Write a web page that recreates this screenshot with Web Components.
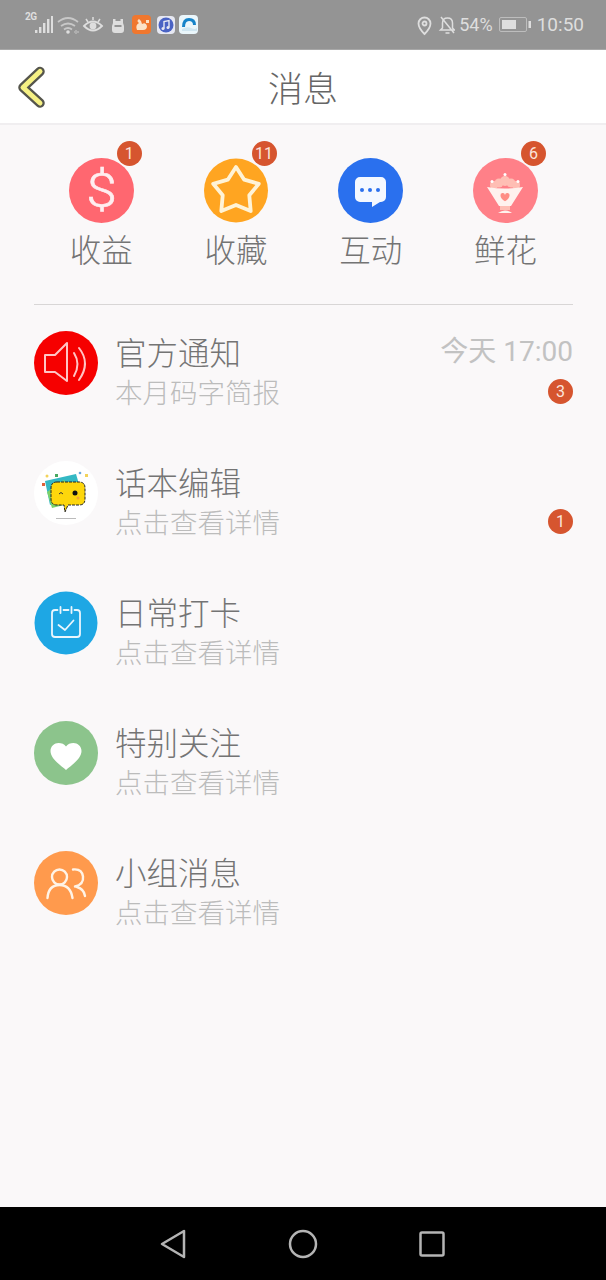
<!DOCTYPE html>
<html lang="zh-CN">

<head>
    <meta charset="UTF-8">
    <title>消息</title>
    <style>
        html, body { margin: 0; padding: 0; }
        body {
            width: 606px;
            height: 1280px;
            overflow: hidden;
            display: flex;
            flex-direction: column;
            background: #faf8f9;
            font-family: "Noto Sans CJK SC", "Noto Sans", sans-serif;
        }
        svg { display: block; }
    </style>
</head>

<body>
    <template id="status-bar-template">
        <style>
            :host { display: flex; flex: none; height: 50px; box-sizing: border-box; border-bottom: 1px solid #a8a8a8; background: #949494; color: #dedede; align-items: center; justify-content: space-between; padding: 0 22px 0 25px; font-family: Roboto, "Liberation Sans", sans-serif; }
            .group { display: flex; align-items: center; }
            .two-g { font-size: 10px; line-height: 10px; font-weight: 700; align-self: flex-start; margin-top: 5px; width: 10px; letter-spacing: -0.5px; }
            .level { font-size: 18px; margin: 0 6px 0 4px; }
            .clock { font-size: 19px; margin-left: 6px; }
            ::slotted([slot="left"]) { margin-top: 3px; }
        </style>
        <div class="group"><span class="two-g">2G</span><slot name="left"></slot></div>
        <div class="group"><slot name="location"></slot><span class="level">54%</span><slot name="battery"></slot><span class="clock">10:50</span></div>
    </template>

    <template id="page-header-template">
        <style>
            :host { display: flex; flex: none; position: relative; height: 75px; box-sizing: border-box; border-bottom: 2px solid #f0eef0; background: #fff; align-items: center; justify-content: center; }
            h1 { margin: 0; font-size: 35px; line-height: 71px; font-weight: 300; color: #666; }
            ::slotted(svg) { position: absolute; left: 14px; top: 13px; }
        </style>
        <slot name="back"></slot>
        <h1><slot></slot></h1>
    </template>

    <template id="count-badge-template">
        <style>
            :host { display: flex; width: 25px; height: 25px; border-radius: 50%; background: #d6552f; color: #fbe4dc; align-items: center; justify-content: center; font: 16px/25px Roboto, "Liberation Sans", sans-serif; }
        </style>
        <slot></slot>
    </template>

    <template id="shortcut-item-template">
        <style>
            :host { display: flex; flex-direction: column; align-items: center; }
            .icon { position: relative; width: 65px; height: 65px; }
            count-badge { position: absolute; left: 48px; top: -17px; }
            .label { margin-top: 4px; font-size: 31.5px; line-height: 42px; font-weight: 300; color: #747474; }
        </style>
        <div class="icon"><slot name="icon"></slot></div>
        <div class="label"></div>
    </template>

    <template id="message-row-template">
        <style>
            :host { display: flex; height: 130px; column-gap: 16px; }
            .icon { flex: none; width: 65px; height: 65px; }
            .text { flex: 1; }
            .title { font-size: 31.5px; line-height: 40px; font-weight: 300; color: #747474; }
            .sub { font-size: 27.5px; line-height: 40px; font-weight: 300; color: #bcbcbc; }
            .meta { display: flex; flex-direction: column; align-items: flex-end; padding-top: 2px; }
            .time { height: 38px; font: 28px/38px Roboto, "Noto Sans CJK SC", sans-serif; color: #c2c2c2; }
            count-badge { margin-top: 8px; }
        </style>
        <div class="icon"><slot name="icon"></slot></div>
        <div class="text">
            <div class="title"></div>
            <div class="sub"></div>
        </div>
        <div class="meta"></div>
    </template>

    <template id="soft-keys-template">
        <style>
            :host { display: flex; flex: none; height: 73px; background: #000; align-items: center; justify-content: center; column-gap: 100px; }
        </style>
        <slot></slot>
    </template>

    <status-bar>
        <svg slot="left" width="173" height="32" viewBox="0 0 173 32" fill="none">
            <!-- signal -->
            <g fill="#dedede"><rect x="0" y="20" width="2.4" height="3"/><rect x="4" y="17" width="2.4" height="6"/><rect x="8" y="13" width="2.4" height="10"/><rect x="12" y="9" width="2.4" height="14"/><rect x="16" y="6" width="2" height="17" /></g>
            <!-- wifi -->
            <g stroke="#c8c8c8" stroke-width="1.8"><path d="M23 12q10-8 20 0"/><path d="M26 16q7-5 14 0"/><path d="M29 19.500q4-3 8 0"/></g>
            <circle cx="33" cy="22" r="1.800" fill="#dedede"/>
            <path d="M39 22h1M41 20v4M43 21v2" stroke="#c8c8c8" stroke-width="1"/>
            <!-- eye -->
            <path d="M49 16q9-9 18 0q-9 9-18 0z" stroke="#dedede" stroke-width="1.800"/>
            <circle cx="58" cy="16" r="3.400" fill="#dedede"/>
            <path d="M51 9l2 3M58 7v3M65 9l-2 3" stroke="#dedede" stroke-width="1.500"/>
            <!-- hippo -->
            <path d="M78 9h2.500v2h5V9H88v4l1 3v4q0 3-3 3h-6q-3 0-3-3v-4l1-3z" fill="#dedede"/>
            <rect x="79.500" y="15" width="7" height="2" fill="#949494"/>
            <!-- squirrel app -->
            <rect x="97" y="5" width="19" height="19" rx="4" fill="#f0772e"/>
            <path d="M102 20q-2-5 2-7q-3-2 0-4q3 2 3 5q4-2 5 2q0 4-4 4z" fill="#fbe3c8"/>
            <path d="M111 10h3v3h-3z" fill="#fbe3c8"/>
            <!-- music app -->
            <rect x="122" y="6" width="18" height="18" rx="4" fill="#e6e8f2"/>
            <circle cx="131" cy="15" r="7.500" fill="#4a63c4"/>
            <path d="M129 18.500v-7l5-1v7" stroke="#e6e8f2" stroke-width="1.400"/>
            <circle cx="128" cy="18.500" r="1.500" fill="#e6e8f2"/><circle cx="133" cy="17.500" r="1.500" fill="#e6e8f2"/>
            <!-- browser app -->
            <rect x="144" y="5" width="19" height="19" rx="4" fill="#eaf6fb"/>
            <path d="M147 17q0-9 7-9t7 7h-3q0-4-4-4t-4 6z" fill="#1583c9"/>
            <path d="M147 19q5-3 9-1t6 0v3h-15z" fill="#cfe6f1"/>
        </svg>
        <svg slot="location" width="38" height="22" viewBox="0 0 38 22" fill="none" stroke="#dedede" stroke-width="1.800">
            <path d="M7.500 20q-6-6-6-10.500a6 6 0 0 1 12 0q0 4.500-6 10.500z"/>
            <circle cx="7.500" cy="9.500" r="2"/>
            <path d="M30.500 4q5 0 5 5v5l2 2h-14l2-2v-5q0-5 5-5zM28.500 19h4M24 3l13 16" stroke-width="1.500"/>
        </svg>
        <svg slot="battery" width="32" height="15" viewBox="0 0 32 15">
            <rect x="0.500" y="0.500" width="27" height="14" rx="1.500" fill="none" stroke="#bdbdbd"/>
            <rect x="3" y="3" width="14" height="9" fill="#dedede"/>
            <rect x="29.500" y="4" width="2.500" height="7" fill="#dedede"/>
        </svg>
    </status-bar>

    <page-header>
        <svg slot="back" width="36" height="46" viewBox="0 0 36 46" fill="none" stroke-linecap="round" stroke-linejoin="round">
            <path d="M26 8.500 9 24.500 26 40" stroke="#55554c" stroke-width="9.500"/>
            <path d="M26 8.500 9 24.500 26 40" stroke="#f6f184" stroke-width="5"/>
        </svg>
        消息
    </page-header>

    <app-main>
        <shortcut-grid>
            <shortcut-item label="收益" badge="1">
                <svg slot="icon" width="65" height="65" viewBox="0 0 65 65">
                    <circle cx="32.500" cy="32.500" r="32.500" fill="#ff6770"/>
                    <text transform="translate(32.500 49) scale(1.150 1)" text-anchor="middle" font-family="Roboto" font-weight="300" font-size="48" fill="#ffeef0" stroke="#ffeef0" stroke-width=".6">$</text>
                </svg>
            </shortcut-item>
            <shortcut-item label="收藏" badge="11">
                <svg slot="icon" width="65" height="65" viewBox="0 0 65 65">
                    <circle cx="32" cy="32.500" r="32" fill="#ffa521"/>
                    <path d="M32 9 40.200 21.700 54.800 25.800 45.300 37.300 46.700 53 32 47 17.300 53 18.700 37.300 9.200 25.800 23.800 21.700z" fill="#ffa521" stroke="#fff3d6" stroke-width="3.800" stroke-linejoin="round"/>
                </svg>
            </shortcut-item>
            <shortcut-item label="互动">
                <svg slot="icon" width="65" height="65" viewBox="0 0 65 65">
                    <circle cx="32.500" cy="32.500" r="32.500" fill="#2a70ee"/>
                    <path d="M22 19h21a5 5 0 0 1 5 5v15a5 5 0 0 1-5 5h-1l-8 5v-5H22a5 5 0 0 1-5-5V24a5 5 0 0 1 5-5z" fill="#f4f8ff"/>
                    <g fill="#2a70ee"><circle cx="24" cy="32" r="2"/><circle cx="32" cy="32" r="2"/><circle cx="40" cy="32" r="2"/></g>
                </svg>
            </shortcut-item>
            <shortcut-item label="鲜花" badge="6">
                <svg slot="icon" width="65" height="65" viewBox="0 0 65 65">
                    <circle cx="32.500" cy="32.500" r="32.500" fill="#ff8088"/>
                    <g fill="#ffbeb4"><circle cx="21" cy="27" r="4"/><circle cx="26" cy="25" r="4.500"/><circle cx="32" cy="23" r="5"/><circle cx="38" cy="25" r="4.500"/><circle cx="43" cy="27" r="4"/></g>
                    <g fill="#fff"><circle cx="19" cy="23.500" r="1.500"/><circle cx="45" cy="23.500" r="1.500"/><circle cx="32" cy="16.500" r="1.500"/></g>
                    <path d="M14 29q18 3 36 0l-12 19H26z" fill="#fff2ee"/>
                    <path d="M32 45q-6-4-6-7.500a3 3 0 0 1 6-1a3 3 0 0 1 6 1q0 3.500-6 7.500z" fill="#ff8d84" transform="translate(8 9.500) scale(.75)"/>
                    <rect x="27" y="48" width="10" height="4" fill="#ffbeb4"/>
                    <path d="M25 55q7-5 14 0z" fill="#fff2ee"/>
                </svg>
            </shortcut-item>
        </shortcut-grid>

        <message-list>
            <message-row title="官方通知" sub="本月码字简报" time="今天 17:00" badge="3">
                <svg slot="icon" width="65" height="65" viewBox="0 0 65 65" fill="none">
                    <circle cx="32" cy="32" r="32" fill="#f60000"/>
                    <path d="M11 24h10l12-12v38L21 41H11z" stroke="#ffc4c4" stroke-width="2" stroke-linejoin="round"/>
                    <path d="M40 22q7 11 0 23M45 17q12 15 0 32" stroke="#ffc4c4" stroke-width="2" stroke-linecap="round"/>
                </svg>
            </message-row>
            <message-row title="话本编辑" sub="点击查看详情" badge="1">
                <svg slot="icon" width="65" height="65" viewBox="0 0 65 65">
                    <circle cx="32" cy="32" r="32" fill="#fff"/>
                    <path d="M11 20 42 13 47 30 16 44z" fill="#34b8c4"/>
                    <path d="M13 31 30 19 46 40 18 47z" fill="#7cd26a"/>
                    <path d="M23 21h22q6 0 6 6v11q0 6-6 6H34l-3 7-1-7h-7q-6 0-6-6V27q0-6 6-6z" fill="#fdd60c" stroke="#222" stroke-width="1" stroke-dasharray="3 1"/>
                    <path d="M25 33q2-3 4 0" fill="none" stroke="#333" stroke-width="1"/>
                    <circle cx="41" cy="32" r="2.500" fill="#111"/>
                    <circle cx="44" cy="37" r="1.500" fill="#f4a53a"/>
                    <g><circle cx="13" cy="15" r="1.500" fill="#f3d35a"/><rect x="21" y="13" width="3" height="3" fill="#48a860"/><circle cx="46" cy="12" r="1.300" fill="#6aa8e0"/><rect x="51" y="13" width="3" height="3" fill="#f3d35a"/><rect x="8" y="22" width="3" height="3" fill="#e0603a"/></g>
                    <rect x="22" y="57" width="20" height="1" fill="#bbb"/>
                </svg>
            </message-row>
            <message-row title="日常打卡" sub="点击查看详情">
                <svg slot="icon" width="65" height="65" viewBox="0 0 65 65" fill="none" stroke="#eaf6fd" stroke-width="1.800" stroke-linecap="round" stroke-linejoin="round">
                    <circle cx="32" cy="32" r="31.500" fill="#1ea7e4" stroke="none"/>
                    <path d="M23.500 19H21q-3 0-3 3v21q0 3 3 3h22q3 0 3-3V22q0-3-3-3h-2.500M29.500 19h5M26.500 16v6M37.500 16v6"/>
                    <path d="M24.500 34l6.500 5 8.500-9.500"/>
                </svg>
            </message-row>
            <message-row title="特别关注" sub="点击查看详情">
                <svg slot="icon" width="65" height="65" viewBox="0 0 65 65">
                    <circle cx="32" cy="32" r="32" fill="#8cc48c"/>
                    <path d="M32 49C27.500 45 16.500 38 16.500 30c0-5 4-8 8-8 3 0 6 1 7.500 3.500C33.500 23 36.500 22 39.500 22c4 0 8 3 8 8 0 8-11 15-15.500 19z" fill="#fff"/>
                </svg>
            </message-row>
            <message-row title="小组消息" sub="点击查看详情">
                <svg slot="icon" width="65" height="65" viewBox="0 0 65 65" fill="none" stroke="#fff3e6" stroke-width="2.400" stroke-linecap="round">
                    <circle cx="32" cy="32" r="32" fill="#ff9a4d" stroke="none"/>
                    <circle cx="25.500" cy="26" r="7.500"/>
                    <path d="M13.500 47q1-13 12-13t13 13"/>
                    <path d="M39 18.500q9-1 10 7t-8 10M43 36q7 2 8 9"/>
                </svg>
            </message-row>
        </message-list>
    </app-main>

    <soft-keys>
        <svg width="28" height="30" viewBox="0 0 28 30" fill="none" stroke="#b4b4b4" stroke-width="2.500" stroke-linejoin="round"><path d="M24 2v26L2 15z"/></svg>
        <svg width="30" height="30" viewBox="0 0 30 30" fill="none" stroke="#b4b4b4" stroke-width="2.500"><circle cx="15" cy="15" r="13"/></svg>
        <svg width="28" height="28" viewBox="0 0 28 28" fill="none" stroke="#b4b4b4" stroke-width="2.500" stroke-linejoin="round"><rect x="2.500" y="2.500" width="23" height="23" rx="1.500"/></svg>
    </soft-keys>

    <script type="module">
        // simple wrapper: clones a template into an open shadow root
        class TemplateElement extends HTMLElement {
            constructor(id) {
                super();
                this.attachShadow({ mode: 'open' });
                const tmp = document.getElementById(id);
                this.shadowRoot.appendChild(tmp.content.cloneNode(true));
            }
        }

        class StatusBar extends TemplateElement {
            constructor() { super('status-bar-template'); }
        }

        class PageHeader extends TemplateElement {
            constructor() { super('page-header-template'); }
        }

        class CountBadge extends TemplateElement {
            constructor() { super('count-badge-template'); }
        }

        class ShortcutItem extends TemplateElement {
            constructor() { super('shortcut-item-template'); }

            connectedCallback() {
                this.shadowRoot.querySelector('.label').textContent = this.getAttribute('label');
                if (this.hasAttribute('badge')) {
                    const badge = document.createElement('count-badge');
                    badge.textContent = this.getAttribute('badge');
                    this.shadowRoot.querySelector('.icon').appendChild(badge);
                }
            }
        }

        class MessageRow extends TemplateElement {
            constructor() { super('message-row-template'); }

            connectedCallback() {
                this.shadowRoot.querySelector('.title').textContent = this.getAttribute('title');
                this.shadowRoot.querySelector('.sub').textContent = this.getAttribute('sub');
                const meta = this.shadowRoot.querySelector('.meta');
                const time = document.createElement('div');
                time.className = 'time';
                time.textContent = this.getAttribute('time') || '';
                meta.appendChild(time);
                if (this.hasAttribute('badge')) {
                    const badge = document.createElement('count-badge');
                    badge.textContent = this.getAttribute('badge');
                    meta.appendChild(badge);
                }
            }
        }

        class SoftKeys extends TemplateElement {
            constructor() { super('soft-keys-template'); }
        }

        // plain layout boxes
        function layoutElement(css) {
            return class extends HTMLElement {
                constructor() {
                    super();
                    this.attachShadow({ mode: 'open' }).innerHTML = `<style>:host{${css}}</style><slot></slot>`;
                }
            };
        }

        customElements.define('count-badge', CountBadge);
        customElements.define('status-bar', StatusBar);
        customElements.define('page-header', PageHeader);
        customElements.define('shortcut-item', ShortcutItem);
        customElements.define('message-row', MessageRow);
        customElements.define('soft-keys', SoftKeys);
        customElements.define('app-main', layoutElement('display:block;flex:1;min-height:0;padding:0 33px 0 34px;'));
        customElements.define('shortcut-grid', layoutElement('display:grid;grid-template-columns:repeat(4,134.7px);height:180px;box-sizing:border-box;padding-top:33px;border-bottom:1px solid #d8d6d6;'));
        customElements.define('message-list', layoutElement('display:block;padding-top:26px;'));
    </script>
</body>

</html>
